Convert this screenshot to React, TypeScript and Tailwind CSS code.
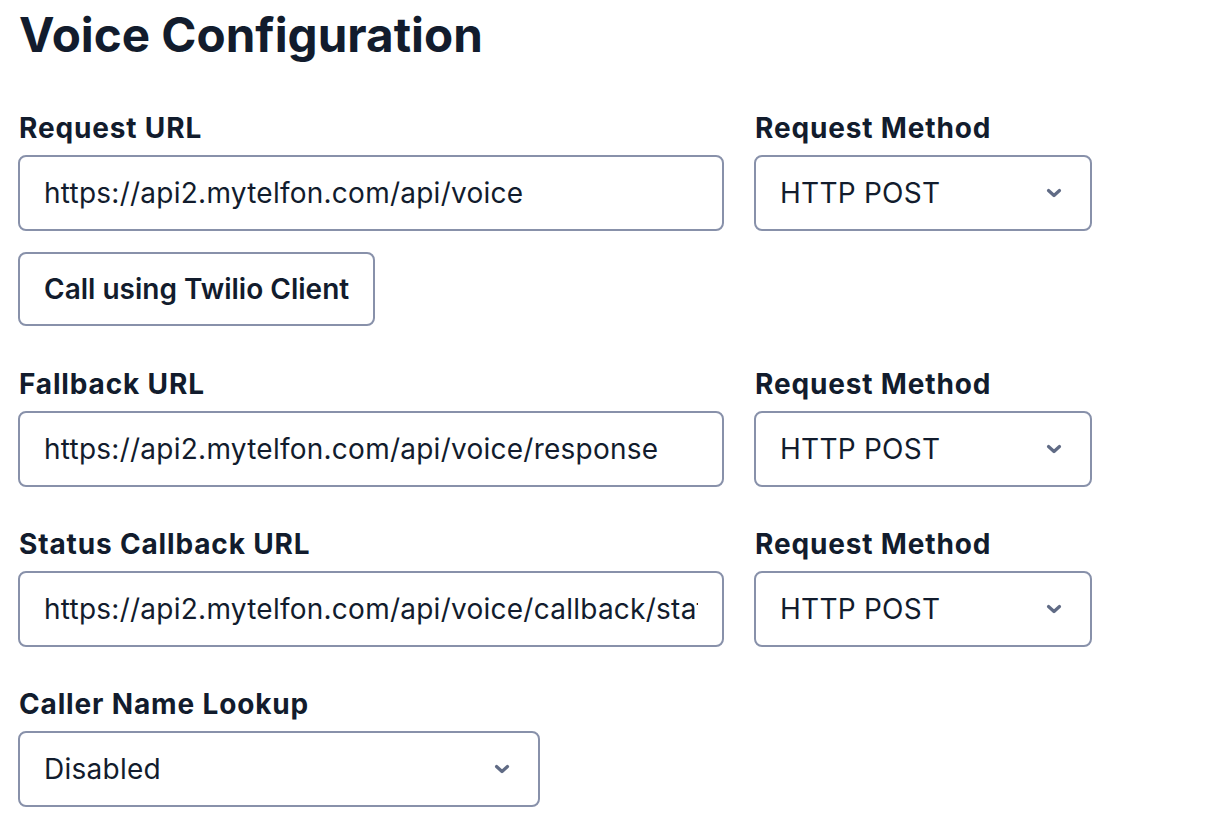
import React from "react";

const font = { fontFamily: "Inter, 'Noto Sans', sans-serif" };

function Chevron() {
  return (
    <svg width="16" height="10" viewBox="0 0 16 10" fill="none" className="shrink-0">
      <path d="M2.5 2.5 L8 7.5 L13.5 2.5" stroke="#606b85" strokeWidth="3.2" strokeLinecap="round" strokeLinejoin="round" />
    </svg>
  );
}

function Label({ children }: { children: React.ReactNode }) {
  return (
    <div className="text-[28px] leading-[36px] font-bold tracking-[0.85px] text-[#121c2d] mb-[9px] pl-[1px]">
      {children}
    </div>
  );
}

function TextInput({ value }: { value: string }) {
  return (
    <input
      readOnly
      value={value}
      className="w-full h-[76px] border-2 border-[#8891aa] rounded-[8px] pl-6 pr-6 text-[28px] tracking-[0.25px] text-[#121c2d] bg-white outline-none"
      style={font}
    />
  );
}

function Select({ value, width }: { value: string; width: string }) {
  return (
    <div className={`${width} h-[76px] border-2 border-[#8891aa] rounded-[8px] pl-6 pr-[28px] flex items-center justify-between bg-white`}>
      <span className="text-[28px] tracking-[0.25px] text-[#121c2d]">{value}</span>
      <Chevron />
    </div>
  );
}

function UrlRow({ label, value }: { label: string; value: string }) {
  return (
    <div className="flex gap-[30px]">
      <div className="w-[706px]">
        <Label>{label}</Label>
        <TextInput value={value} />
      </div>
      <div className="w-[338px]">
        <Label>Request Method</Label>
        <Select value="HTTP POST" width="w-[338px]" />
      </div>
    </div>
  );
}

export default function App() {
  return (
    <div className="min-h-screen bg-white pl-[18px] pt-[6px]" style={font}>
      <h1 className="text-[47.6px] leading-[57px] font-bold text-[#121c2d] pl-[1px]">Voice Configuration</h1>
      <div className="mt-[47px]">
        <UrlRow label="Request URL" value="https://api2.mytelfon.com/api/voice" />
        <button className="mt-[21px] h-[74px] px-6 border-2 border-[#8891aa] rounded-[8px] text-[28px] font-semibold text-[#121c2d] bg-white">
          Call using Twilio Client
        </button>
      </div>
      <div className="mt-[40px]">
        <UrlRow label="Fallback URL" value="https://api2.mytelfon.com/api/voice/response" />
      </div>
      <div className="mt-[39px]">
        <UrlRow label="Status Callback URL" value="https://api2.mytelfon.com/api/voice/callback/status" />
      </div>
      <div className="mt-[39px]">
        <Label>Caller Name Lookup</Label>
        <Select value="Disabled" width="w-[522px]" />
      </div>
    </div>
  );
}
